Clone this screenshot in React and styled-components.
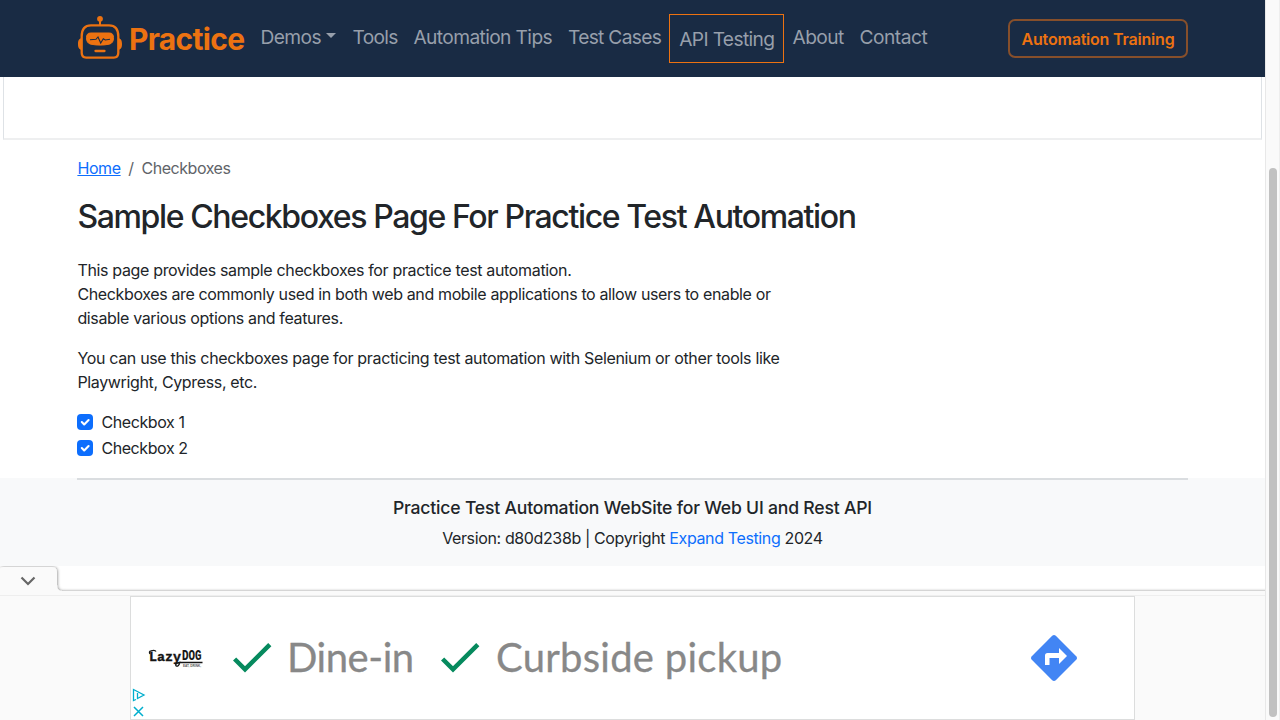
import React from 'react';
import styled, { createGlobalStyle } from 'styled-components';

const GlobalStyle = createGlobalStyle`
  *, *::before, *::after { box-sizing: border-box; }
  html, body { margin: 0; height: 720px; overflow: hidden; background: #fff; }
  body {
    font-family: Inter, "Liberation Sans", sans-serif;
    font-size: 16px;
    line-height: 24px;
    color: #212529;
  }
  p, h1, h2 { margin: 0; }
`;

const Screen = styled.div`
  display: flex;
  width: 1280px;
  height: 720px;
  overflow: hidden;
`;

const Page = styled.div`
  display: flex;
  flex-direction: column;
  width: 1265px;
  height: 720px;
`;

const Text = styled.span`
  white-space: nowrap;
  letter-spacing: ${(p) => p.$ls || 0}px;
`;

const Navbar = styled.nav`
  display: flex;
  align-items: flex-start;
  height: 77px;
  padding: 0 77.5px 0 77px;
  background: #192b44;
`;

const Brand = styled.a`
  display: flex;
  align-items: center;
  width: 175.5px;
  height: 76px;
  color: #ec7211;
  font-size: 30px;
  font-weight: 700;
  white-space: nowrap;

  svg { flex: none; margin-right: 6px; }
  span { position: relative; top: 1px; }
`;

const NavLink = styled.a`
  display: flex;
  align-items: center;
  flex: none;
  width: ${(p) => p.$w}px;
  height: ${(p) => (p.$boxed ? 49 : 47)}px;
  margin-top: ${(p) => (p.$boxed ? 14 : 13)}px;
  padding: 0 8px 0 ${(p) => (p.$boxed ? 9 : 8)}px;
  border: ${(p) => (p.$boxed ? '1px solid #ec7211' : '0')};
  color: #979fab;
  font-size: 19.2px;
`;

const Caret = styled.span`
  width: 0;
  height: 0;
  margin: -2px 0 0 5px;
  border: 5.5px solid transparent;
  border-top-color: #979fab;
  border-bottom: 0;
`;

const TrainingButton = styled.a`
  display: flex;
  align-items: center;
  justify-content: center;
  width: 180px;
  height: 39px;
  margin: 19px 0 0 auto;
  padding-left: 1px;
  border: 2px solid #864f2b;
  border-radius: 7px;
  color: #ec7211;
  font-weight: 600;
`;

const AdFrame = styled.div`
  height: 63px;
  margin: 0 3px;
  border: 1px solid #dee2e6;
  border-top: 0;
  border-bottom: 2px solid #eeeff0;
`;

const Main = styled.main`
  height: 338px;
  padding: 16px 77.5px 0 77.4px;
`;

const Breadcrumb = styled.div`
  display: flex;
  gap: 7.5px;
  color: #5f6469;
  a { color: #0d6efd; text-decoration: underline; }
`;

const Title = styled.h1`
  margin-top: 18px;
  font-size: 32px;
  font-weight: 500;
  line-height: 38px;
`;

const Copy = styled.p`
  display: flex;
  flex-direction: column;
  margin-top: ${(p) => p.$top}px;
`;

const CheckRow = styled.label`
  display: flex;
  align-items: center;
  gap: 8px;
  height: 24px;
  margin-top: ${(p) => p.$top}px;
`;

const Box = styled.span`
  display: flex;
  width: 16px;
  height: 16px;
  border-radius: 4px;
  background: #0d6efd;
`;

const Footer = styled.footer`
  display: flex;
  flex-direction: column;
  align-items: center;
  height: 88px;
  padding: 0 77.5px 0 77.4px;
  background: #f8f9fa;
  h2 { margin-top: 17px; font-size: 17.6px; line-height: 22px; font-weight: 500; }
  p { margin-top: 7px; }
  a { color: #0d6efd; }
`;

const Rule = styled.div`
  align-self: stretch;
  height: 2px;
  background: #dadde0;
`;

const TabStrip = styled.div`
  flex: none;
  height: 30px;
  svg { display: block; }
`;

const AdBar = styled.div`
  display: flex;
  justify-content: center;
  height: 124px;
  background: #fafafa;
`;

const Ad = styled.div`
  position: relative;
  display: flex;
  align-items: center;
  width: 1005px;
  height: 124px;
  padding-left: 17px;
  border: 1px solid #dcdddd;
  background: #fff;
  color: #888;
  font-family: Lato, sans-serif;
  font-size: 40px;
  line-height: 48px;
  svg { flex: none; }
`;

const AdLabel = styled.div`
  flex: none;
  width: ${(p) => p.$w}px;
  margin: -3px 0 0 ${(p) => p.$gap}px;
  -webkit-text-stroke: 0.3px #888;
`;

const TickSlot = styled.div`
  display: flex;
  margin-left: ${(p) => p.$gap || 0}px;
`;

const AdControls = styled.div`
  position: absolute;
  left: 1px;
  top: 91px;
  svg { display: block; }
`;

const ScrollTrack = styled.div`
  width: 15px;
  padding: 168px 3px 3px;
  border-left: 1px solid #e8e8e8;
  border-right: 1px solid #eee;
  background: #fafafa;
`;

const Thumb = styled.div`
  width: 8px;
  height: 549px;
  border-radius: 4px;
  background: #c1c1c1;
`;

const Robot = () => (
  <svg width="46" height="46" viewBox="0 0 46 46" fill="none" stroke="#ec7211">
    <circle cx="23" cy="3.800" r="2.900" fill="#ec7211" stroke="none" />
    <path d="M23 5v5" strokeWidth="2" />
    <path d="M14 10.300h18c7 0 9.300 5 9.300 11v16.500c0 3-1.800 4.800-4.500 4.800H9.200c-2.700 0-4.500-1.800-4.500-4.800V21.300c0-6 2.300-11 9.300-11z" strokeWidth="2.300" />
    <path d="M5 23C1.800 23.700 1 25.700 1 29s.8 5.200 4 6.200zM41 23c3.200.7 4 2.700 4 6s-.8 5.200-4 6.200z" fill="#ec7211" stroke="none" />
    <path d="M13.500 18h19c3 0 4 2 4 4.700 0 3.500-1.200 5.900-4.500 6.500-6 1.200-12 1.200-18 0-3.300-.6-4.500-3-4.500-6.500 0-2.700 1-4.700 4-4.700z" fill="#ec7211" stroke="#ec7211" strokeWidth="1" />
    <path d="M13 24.700 19 24.300 21 22l2.700 6 2.600-4.300 2 1.300 4.700-.7" stroke="#192b44" strokeWidth="1.100" />
    <path d="M18.500 36h9" strokeWidth="2.300" strokeLinecap="round" />
  </svg>
);

const Check = () => (
  <Box>
    <svg width="16" height="16" viewBox="0 0 20 20" fill="none" stroke="#fff" strokeWidth="2.600" strokeLinecap="round" strokeLinejoin="round">
      <path d="m6 10 3 3 5.500-5.500" />
    </svg>
  </Box>
);

const Tick = () => (
  <svg width="39" height="30" viewBox="0 0 39 30" fill="none" stroke="#068a5e" strokeWidth="4.500">
    <path d="M1.600 16 12 26.400 36.800 1.600" />
  </svg>
);

const CollapseTab = () => (
  <svg width="1265" height="30" viewBox="0 0 1265 30">
    <defs>
      <filter id="soft" x="-5%" y="-30%" width="110%" height="160%">
        <feDropShadow dx="0.500" dy="0" stdDeviation="1.400" floodOpacity="0.450" />
      </filter>
    </defs>
    <path d="M-1 40V5.500q0-4.500 4.500-4.500H52q5 0 5 5V19q0 6 5.500 6H1275V40z" fill="#fafafa" filter="url(#soft)" />
    <path d="M0 29.500h1265" stroke="#eee" />
    <path d="m21.500 11.500 6.500 6.500 6.500-6.500" fill="none" stroke="#666" strokeWidth="2.200" />
  </svg>
);

const LazyDog = () => (
  <svg width="56" height="24" viewBox="0 0 56 24" overflow="visible" fill="#151515">
    <g fontWeight="700">
      <text x="1" y="15" fontSize="13.500" fontFamily="Liberation Mono" stroke="#151515" strokeWidth="0.400" textLength="32" lengthAdjust="spacingAndGlyphs">Lazy</text>
      <text x="34" y="14.200" fontSize="15.500" fontFamily="Liberation Mono" stroke="#151515" strokeWidth="0.200" textLength="19.500" lengthAdjust="spacingAndGlyphs">DOG</text>
      <text x="35" y="20.500" fontSize="3" fontFamily="Liberation Sans" fill="#555" textLength="18" lengthAdjust="spacingAndGlyphs">EAT, DRINK,</text>
    </g>
    <path d="M54.500 16.500H32.500q-4 0-4.800 2 0 2 2 1.600 1.600-.5 2.300-4.600" fill="none" stroke="#151515" strokeWidth="1.300" />
    <path d="M2 8q-1.500-2.500 1-3.200Q7 3.500 8 5.500" fill="none" stroke="#151515" strokeWidth="1.300" />
  </svg>
);

const Directions = () => (
  <svg width="46" height="46" viewBox="0 0 46 46">
    <path d="M21.200.800q1.800-1.600 3.600 0L45.200 21.200q1.600 1.800 0 3.600L24.800 45.200q-1.800 1.600-3.600 0L.800 24.800q-1.600-1.800 0-3.600z" fill="#4285f4" />
    <path d="M14 30V20.500q0-2.500 2.500-2.500H28V13l8 8-8 8v-6H18.500v7z" fill="#fff" />
  </svg>
);

const DirectionsSlot = styled.div`
  display: flex;
  margin: -1px 57px 0 auto;
`;

export default function App() {
  return (
    <>
      <GlobalStyle />
      <Screen>
        <Page>
          <Navbar>
            <Brand><Robot /><Text $ls={-0.7}>Practice</Text></Brand>
            <NavLink $w={92}><Text $ls={-0.6}>Demos</Text><Caret /></NavLink>
            <NavLink $w={61}><Text $ls={-0.7}>Tools</Text></NavLink>
            <NavLink $w={154.5}><Text $ls={-0.62}>Automation Tips</Text></NavLink>
            <NavLink $w={109.2}><Text $ls={-0.7}>Test Cases</Text></NavLink>
            <NavLink $w={115.3} $boxed><Text $ls={-0.65}>API Testing</Text></NavLink>
            <NavLink $w={67}><Text $ls={-0.55}>About</Text></NavLink>
            <NavLink $w={84}><Text $ls={-0.5}>Contact</Text></NavLink>
            <TrainingButton><Text $ls={-0.2}>Automation Training</Text></TrainingButton>
          </Navbar>
          <AdFrame />
          <Main>
            <Breadcrumb>
              <a><Text $ls={-0.4}>Home</Text></a>
              <span>/</span>
              <Text $ls={-0.45}>Checkboxes</Text>
            </Breadcrumb>
            <Title><Text $ls={-1.37}>Sample Checkboxes Page For Practice Test Automation</Text></Title>
            <Copy $top={22}>
              <Text $ls={-0.34}>This page provides sample checkboxes for practice test automation.</Text>
              <Text $ls={-0.365}>Checkboxes are commonly used in both web and mobile applications to allow users to enable or</Text>
              <Text $ls={-0.355}>disable various options and features.</Text>
            </Copy>
            <Copy $top={16}>
              <Text $ls={-0.335}>You can use this checkboxes page for practicing test automation with Selenium or other tools like</Text>
              <Text $ls={-0.35}>Playwright, Cypress, etc.</Text>
            </Copy>
            <CheckRow $top={16}><Check /><Text $ls={-0.4}>Checkbox 1</Text></CheckRow>
            <CheckRow $top={2}><Check /><Text $ls={-0.42}>Checkbox 2</Text></CheckRow>
          </Main>
          <Footer>
            <Rule />
            <h2><Text $ls={-0.2}>Practice Test Automation WebSite for Web UI and Rest API</Text></h2>
            <p><Text $ls={-0.37}>Version: d80d238b | Copyright <a>Expand Testing</a> 2024</Text></p>
          </Footer>
          <TabStrip><CollapseTab /></TabStrip>
          <AdBar>
            <Ad>
              <LazyDog />
              <TickSlot $gap={29}><Tick /></TickSlot>
              <AdLabel $w={154} $gap={15}><Text $ls={-0.45}>Dine-in</Text></AdLabel>
              <TickSlot><Tick /></TickSlot>
              <AdLabel $w={300} $gap={16}><Text $ls={0.27}>Curbside pickup</Text></AdLabel>
              <DirectionsSlot><Directions /></DirectionsSlot>
              <AdControls>
                <svg width="14" height="30" viewBox="0 0 14 30" fill="none" stroke="#00aecd" strokeWidth="1.300">
                  <path d="M4 11.500 1.500 12.500V1.500L12 7 5.500 10.500V5" />
                  <path d="m2 19 9 9m0-9-9 9" strokeWidth="1.500" />
                </svg>
              </AdControls>
            </Ad>
          </AdBar>
        </Page>
        <ScrollTrack><Thumb /></ScrollTrack>
      </Screen>
    </>
  );
}
